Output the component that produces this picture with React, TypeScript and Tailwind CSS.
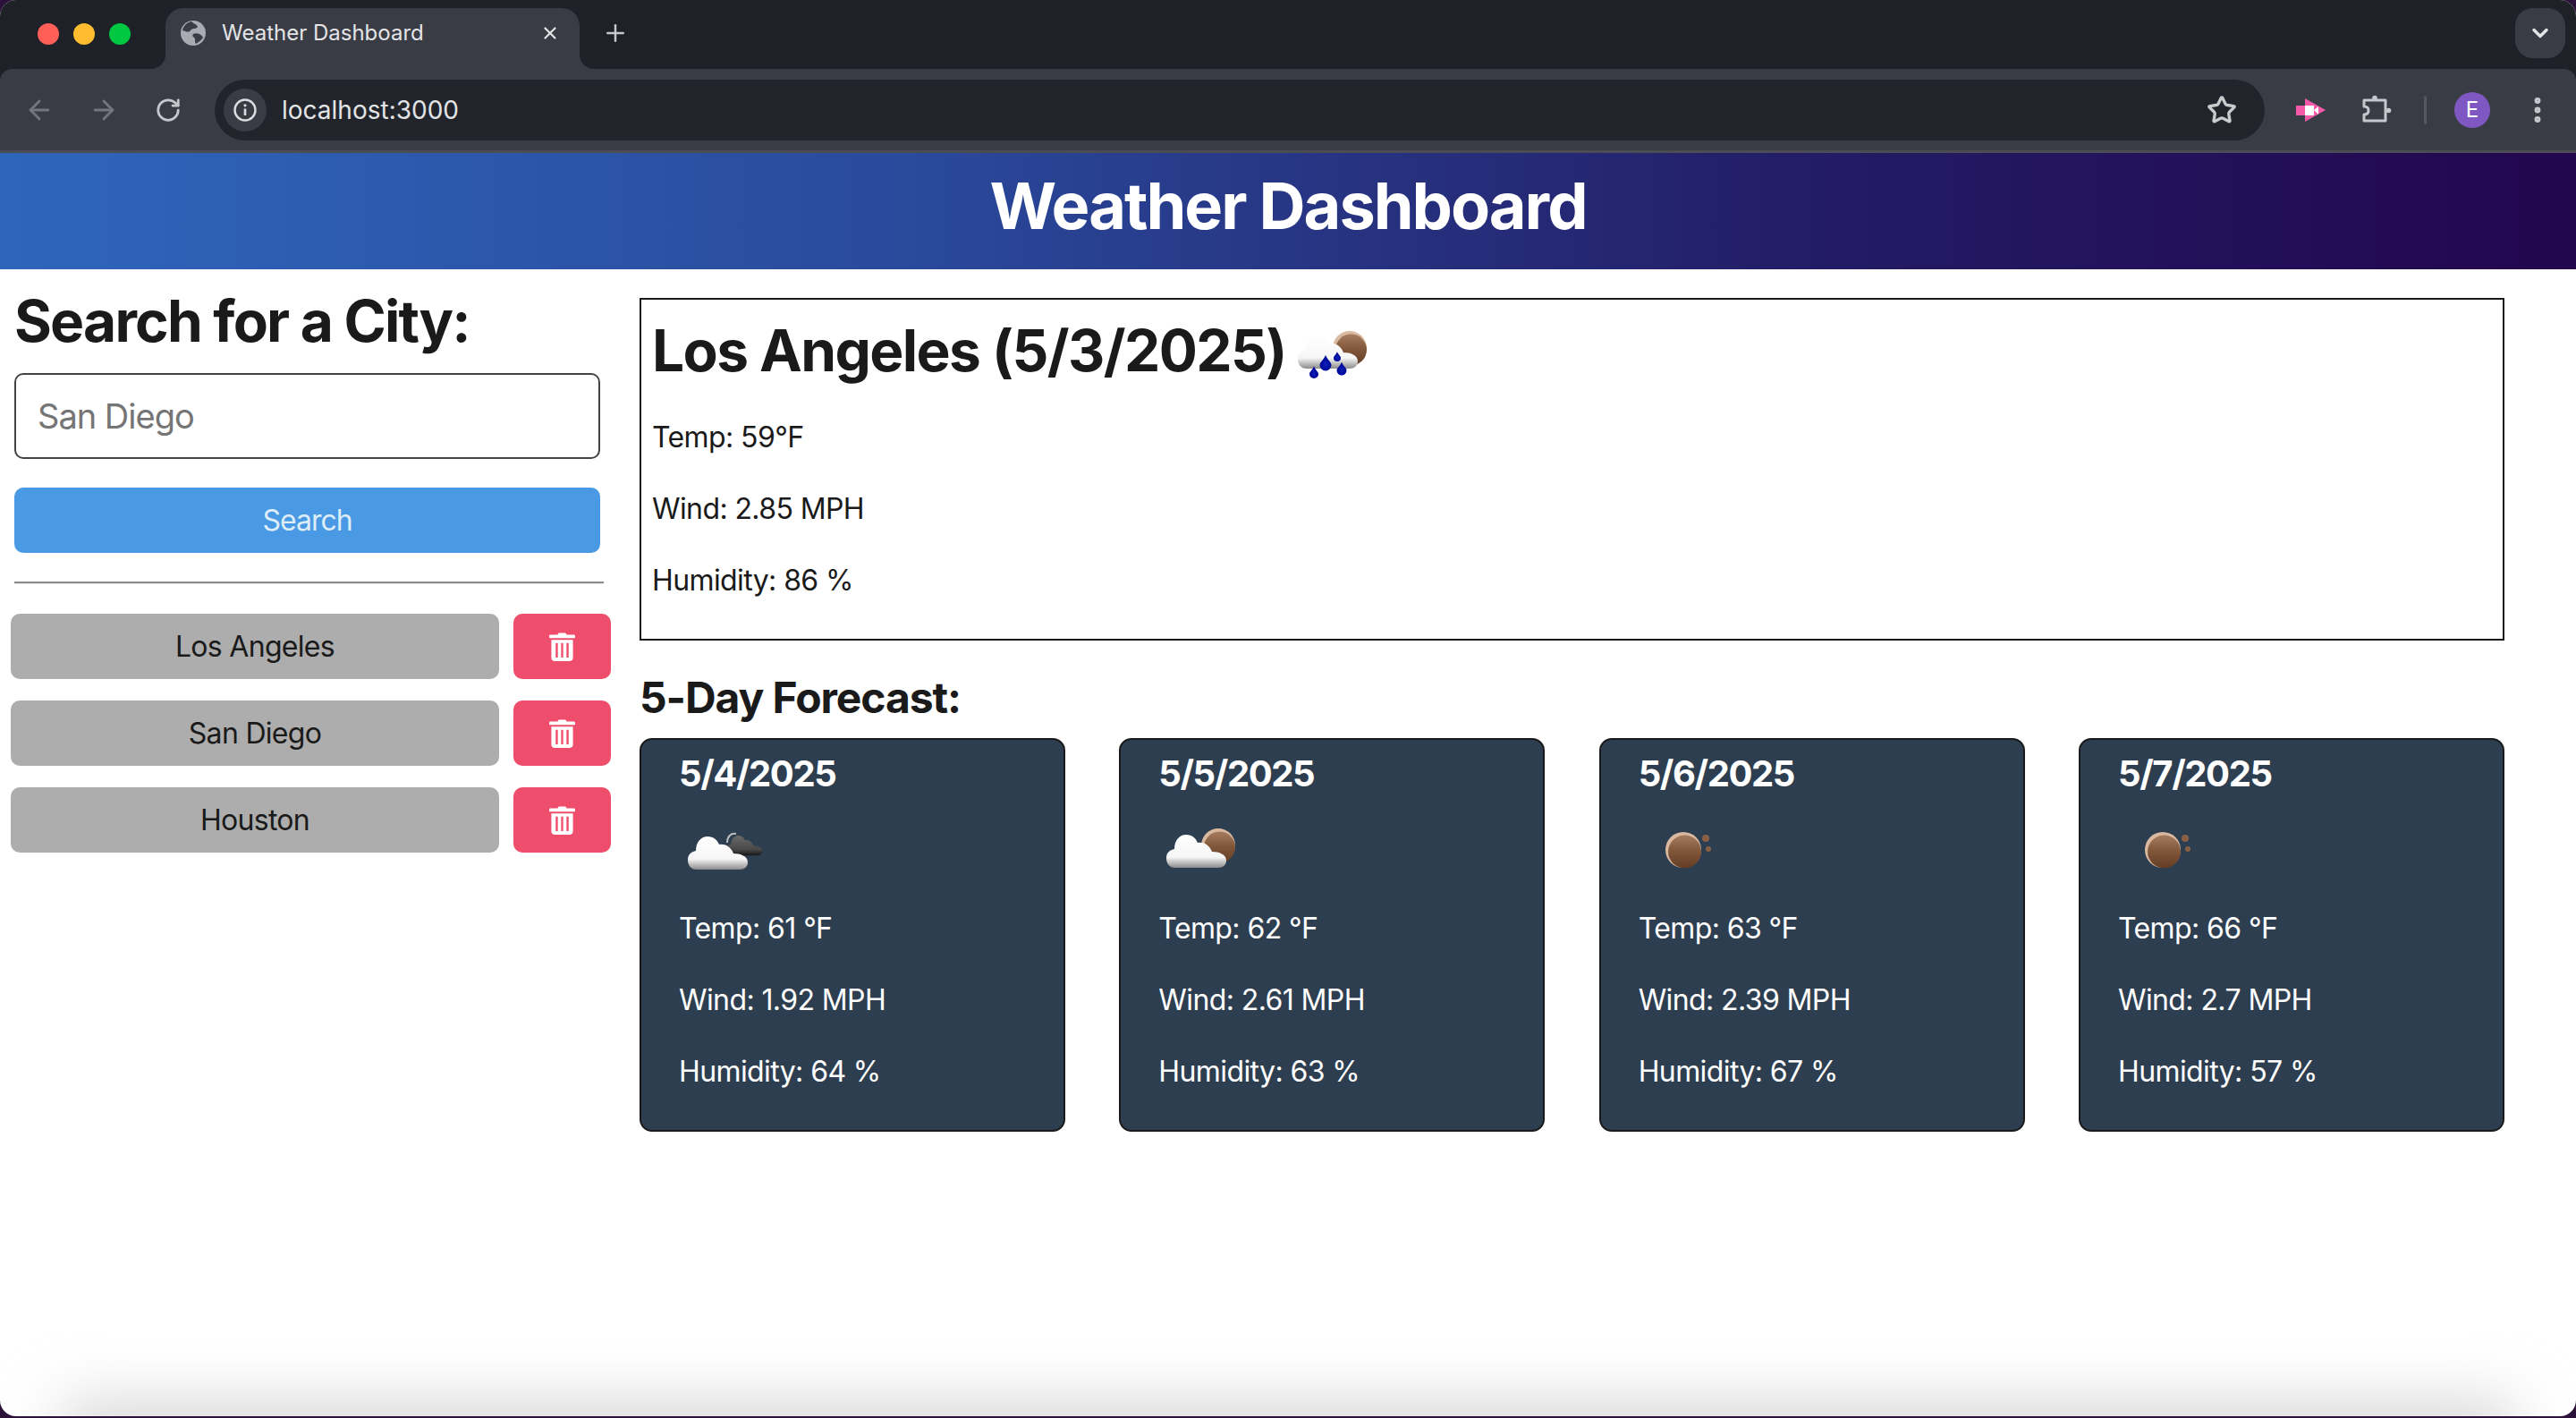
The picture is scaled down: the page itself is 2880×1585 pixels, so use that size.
import { ArrowLeft, ArrowRight, ChevronDown, EllipsisVertical, Plus, RotateCw, Star, X } from "lucide-react";

type Forecast = {
  date: string;
  icon: "dark-cloud" | "cloud-moon" | "moon";
  temp: number;
  wind: string;
  humidity: number;
};

const forecasts: Forecast[] = [
  { date: "5/4/2025", icon: "dark-cloud", temp: 61, wind: "1.92", humidity: 64 },
  { date: "5/5/2025", icon: "cloud-moon", temp: 62, wind: "2.61", humidity: 63 },
  { date: "5/6/2025", icon: "moon", temp: 63, wind: "2.39", humidity: 67 },
  { date: "5/7/2025", icon: "moon", temp: 66, wind: "2.7", humidity: 57 },
];

const cities = ["Los Angeles", "San Diego", "Houston"];

const cloudPath =
  "M10 37 C3 37 0 32 0 26 C0 20 4 17 9 16 C9 6 15 0 22 0 C29 0 33 4 35 9 C41 8 48 11 51 19 C59 19 67 22 67 29 C67 34 63 37 58 37 Z";

function WeatherDefs() {
  return (
    <svg width="0" height="0" className="absolute">
      <defs>
        <linearGradient id="cloudFill" x1="0" y1="0" x2="0" y2="1">
          <stop offset="0" stopColor="#ffffff" />
          <stop offset="0.68" stopColor="#f6f6f6" />
          <stop offset="1" stopColor="#8b8b8b" />
        </linearGradient>
        <linearGradient id="darkCloudFill" x1="0" y1="0" x2="0" y2="1">
          <stop offset="0" stopColor="#6a6a6a" />
          <stop offset="0.7" stopColor="#484848" />
          <stop offset="1" stopColor="#161616" />
        </linearGradient>
        <linearGradient id="moonFill" x1="0" y1="0" x2="0" y2="1">
          <stop offset="0" stopColor="#a67c60" />
          <stop offset="0.5" stopColor="#7f5538" />
          <stop offset="1" stopColor="#633d25" />
        </linearGradient>
        <radialGradient id="dropFill" cx="0.5" cy="0.6" r="0.6">
          <stop offset="0" stopColor="#0a1db8" />
          <stop offset="1" stopColor="#00008a" />
        </radialGradient>
        <filter id="soft" x="-20%" y="-20%" width="140%" height="140%">
          <feGaussianBlur stdDeviation="0.7" />
        </filter>
      </defs>
    </svg>
  );
}

function Drop({ x, y, r }: { x: number; y: number; r: number }) {
  return <path d={`M${x} ${y - r * 1.7} C${x + r * 0.4} ${y - r * 0.8} ${x + r} ${y - r * 0.5} ${x + r} ${y} A${r} ${r} 0 1 1 ${x - r} ${y} C${x - r} ${y - r * 0.5} ${x - r * 0.4} ${y - r * 0.8} ${x} ${y - r * 1.7} Z`} fill="url(#dropFill)" />;
}

function Moon({ cx, cy, r }: { cx: number; cy: number; r: number }) {
  return (
    <g>
      <circle cx={cx} cy={cy} r={r} fill="#d9b9a0" />
      <circle cx={cx + 1.5} cy={cy + 2} r={r - 1.5} fill="url(#moonFill)" />
    </g>
  );
}

function WeatherIcon({ kind }: { kind: Forecast["icon"] }) {
  return (
    <svg width="100" height="100" viewBox="0 0 100 100" className="block">
      <g filter="url(#soft)">
        {kind === "dark-cloud" && (
          <g>
            <path d="M54 42 C54 35 58 31 64 32" fill="none" stroke="#b9bdbf" strokeWidth="2" />
            <g transform="translate(53 34) scale(0.6 0.6)">
              <path d={cloudPath} fill="url(#darkCloudFill)" />
            </g>
            <g transform="translate(10 35)">
              <path d={cloudPath} fill="url(#cloudFill)" />
            </g>
          </g>
        )}
        {kind === "cloud-moon" && (
          <g>
            <Moon cx={67} cy={45} r={19} />
            <g transform="translate(9 33)">
              <path d={cloudPath} fill="url(#cloudFill)" />
            </g>
          </g>
        )}
        {kind === "moon" && (
          <g>
            <Moon cx={50} cy={50} r={20} />
            <circle cx={75} cy={37} r={4} fill="#8a6045" />
            <circle cx={78} cy={49} r={3} fill="#8a6045" />
          </g>
        )}
      </g>
    </svg>
  );
}

function RainIcon() {
  return (
    <svg width="100" height="100" viewBox="0 0 100 100" className="block">
      <g filter="url(#soft)">
        <Moon cx={68} cy={47} r={19} />
        <g transform="translate(10 33)">
          <path d={cloudPath} fill="url(#cloudFill)" />
        </g>
        <Drop x={28} y={76} r={5} />
        <Drop x={41} y={66} r={6.5} />
        <Drop x={54} y={58} r={4} />
        <Drop x={59} y={72} r={5.5} />
      </g>
    </svg>
  );
}

function TrashIcon() {
  return (
    <svg width="29" height="32" viewBox="0 0 30 33" fill="#ffffff">
      <path d="M10 2.5 C10 1 11 0.5 12 0.5 H18 C19 0.5 20 1 20 2.5 H28.5 C29.3 2.5 30 3.2 30 4 V5.5 C30 6 29.6 6.5 29 6.5 H1 C0.4 6.5 0 6 0 5.5 V4 C0 3.2 0.7 2.5 1.5 2.5 Z" />
      <path fillRule="evenodd" d="M2.5 8.5 H27.5 V29.5 C27.5 31.4 26 33 24 33 H6 C4 33 2.5 31.4 2.5 29.5 Z M7.5 12 V29 H10 V12 Z M13.8 12 V29 H16.2 V12 Z M20 12 V29 H22.5 V12 Z" />
    </svg>
  );
}

function GlobeFavicon() {
  return (
    <svg width="28" height="28" viewBox="0 0 28 28">
      <circle cx="14" cy="14" r="14" fill="#a9abb2" />
      <path d="M12 1 C15 4 18 4 19 7 C17 10 13 8 11 11 C9 14 6 12 2 11 C3 6 7 2 12 1 Z" fill="#3a3c45" />
      <path d="M14 15 C18 13 23 15 25 19 C23 22 20 24 17 26 C15 23 17 21 15 19 C13 18 13 16 14 15 Z" fill="#3a3c45" />
    </svg>
  );
}

function InfoGlyph() {
  return (
    <svg width="26" height="26" viewBox="0 0 26 26" fill="none" stroke="#dcdde0" strokeWidth="2.4">
      <circle cx="13" cy="13" r="11.5" />
      <path d="M13 11.5 V19" strokeWidth="2.6" />
      <circle cx="13" cy="7.8" r="1.6" fill="#dcdde0" stroke="none" />
    </svg>
  );
}

function PuzzleGlyph() {
  return (
    <svg width="34" height="34" viewBox="0 0 34 34" fill="none" stroke="#c4c7cc" strokeWidth="3" strokeLinejoin="round">
      <path d="M3 6 H27 V29 H3 V22 C6.5 22 8 20 8 17.5 C8 15 6.5 13 3 13 Z" />
      <circle cx="15" cy="3.5" r="2.8" fill="#c4c7cc" stroke="none" />
      <circle cx="30.5" cy="17.5" r="2.8" fill="#c4c7cc" stroke="none" />
    </svg>
  );
}

function RecorderGlyph() {
  return (
    <svg width="34" height="28" viewBox="0 0 34 28">
      <rect x="0" y="9" width="10" height="11" fill="#f45aa8" />
      <path d="M10 1 L33 14 L10 27 Z" fill="#f45aa8" />
      <rect x="10" y="9" width="10" height="11" fill="#ffffff" />
      <path d="M20 14 L25 10 V19 Z" fill="#ffffff" />
    </svg>
  );
}

function BrowserChrome() {
  return (
    <div className="shrink-0 bg-[#1e2128] font-['Inter',sans-serif]">
      <div className="flex h-[77px] items-start">
        <div className="flex h-[76px] w-[185px] shrink-0 items-center gap-4 pl-[42px]">
          <span className="size-6 rounded-full bg-[#ff5f57]" />
          <span className="size-6 rounded-full bg-[#febc2e]" />
          <span className="size-6 rounded-full bg-[#00c840]" />
        </div>
        <div className="relative mt-[9px] flex h-[68px] w-[463px] shrink-0 items-start rounded-t-[20px] bg-[#3a3c45] pl-[17px] pt-[14px]">
          <span className="absolute -left-4 bottom-0 size-4 bg-[#3a3c45]">
            <span className="block size-4 rounded-br-[16px] bg-[#1e2128]" />
          </span>
          <span className="absolute -right-4 bottom-0 size-4 bg-[#3a3c45]">
            <span className="block size-4 rounded-bl-[16px] bg-[#1e2128]" />
          </span>
          <GlobeFavicon />
          <span className="ml-[18px] text-[24px] leading-[28px] text-[#e3e4e6]">Weather Dashboard</span>
          <X className="absolute right-[22px] top-[17px] text-[#e3e4e6]" size={22} strokeWidth={2.4} />
        </div>
        <Plus className="ml-[25px] mt-[22px] text-[#c4c7cc]" size={30} strokeWidth={2} />
        <div className="ml-auto mr-3 mt-[9px] flex size-14 items-center justify-center rounded-[20px] bg-[#3a3c45]">
          <ChevronDown className="text-[#e3e4e6]" size={28} strokeWidth={3} />
        </div>
      </div>
      <div className="flex h-[94px] items-start rounded-t-[14px] border-b-[3px] border-[#4b4c54] bg-[#3a3c45] pt-3">
        <div className="flex h-[68px] w-[240px] shrink-0 items-center pl-[27px]">
          <ArrowLeft className="text-[#75767d]" size={34} strokeWidth={2} />
          <ArrowRight className="ml-[38px] text-[#75767d]" size={34} strokeWidth={2} />
          <RotateCw className="ml-[40px] text-[#c4c7cc]" size={30} strokeWidth={2.2} />
        </div>
        <div className="flex h-[68px] w-[2292px] shrink-0 items-center rounded-full bg-[#22242c] pl-[10px] pr-[31px]">
          <span className="flex size-12 items-center justify-center rounded-full bg-[#3a3c45]">
            <InfoGlyph />
          </span>
          <span className="ml-[17px] text-[28px] text-[#e3e4e6]">localhost:3000</span>
          <Star className="ml-auto text-[#c9cacc]" size={34} strokeWidth={2.4} />
        </div>
        <div className="flex h-[68px] flex-1 items-center">
          <span className="ml-[35px]"><RecorderGlyph /></span>
          <span className="ml-[39px]"><PuzzleGlyph /></span>
          <span className="ml-[36px] h-8 w-[3px] rounded-full bg-[#55565e]" />
          <span className="ml-[31px] flex size-10 items-center justify-center rounded-full bg-[#7e57c2] text-[24px] text-white">E</span>
          <EllipsisVertical className="ml-[35px] text-[#c4c7cc]" size={36} strokeWidth={2.6} />
        </div>
      </div>
    </div>
  );
}

function Sidebar() {
  return (
    <aside className="w-[715px] shrink-0 pl-3 pt-[19px]">
      <div className="w-[663px] pl-1">
        <h2 className="mb-5 text-[64px] font-bold leading-[77px] tracking-[-1.8px] text-[#1a1a1a]">Search for a City:</h2>
        <input
          readOnly
          placeholder="San Diego"
          className="block h-24 w-[655px] rounded-[10px] border-2 border-[#444444] bg-white px-6 text-[38px] tracking-[-1px] text-[#212529] placeholder:text-[#757575]"
        />
        <button className="mt-8 block h-[73px] w-[655px] rounded-[10px] bg-[#4a99e4] text-[32px] tracking-[-1px] text-[#dcedf8]">Search</button>
        <hr className="mt-8 h-[3px] border-0 border-b border-b-[#e6e6e6] bg-[#8c8c8c]" />
      </div>
      <div className="mt-[33px] flex flex-col gap-6">
        {cities.map((city) => (
          <div key={city} className="flex h-[73px] gap-4">
            <button className="w-[546px] rounded-[10px] bg-[#adadad] text-[32px] tracking-[-0.7px] text-[#1a1a1a]">{city}</button>
            <button className="flex w-[109px] items-center justify-center rounded-[10px] bg-[#ee4e6b]">
              <TrashIcon />
            </button>
          </div>
        ))}
      </div>
    </aside>
  );
}

function ForecastCard({ item }: { item: Forecast }) {
  return (
    <div className="h-[440px] w-[476px] rounded-[14px] border-2 border-[#1a1a1a] bg-[#2d3e50] pl-[42px] pt-[14px] text-white">
      <h4 className="text-[40px] font-bold leading-[48px] tracking-[-1.4px]">{item.date}</h4>
      <div className="mt-[11px]">
        <WeatherIcon kind={item.icon} />
      </div>
      <p className="mt-[14px] text-[32px] leading-[48px] tracking-[-0.6px]">Temp: {item.temp} °F</p>
      <p className="mt-8 text-[32px] leading-[48px] tracking-[-0.6px]">Wind: {item.wind} MPH</p>
      <p className="mt-8 text-[32px] leading-[48px] tracking-[-0.6px]">Humidity: {item.humidity} %</p>
    </div>
  );
}

export default function App() {
  return (
    <div className="h-[1585px] w-[2880px] overflow-hidden bg-[#2a1238] font-['Inter',sans-serif]">
      <WeatherDefs />
      <div className="relative flex h-[1583px] flex-col overflow-hidden rounded-[18px] bg-white text-[#1a1a1a]">
        <BrowserChrome />
        <header className="flex h-[130px] shrink-0 items-center justify-center bg-[linear-gradient(90deg,#2e66bc,#2a4a9c_35%,#231c66_70%,#22064e)] pb-3">
          <h1 className="text-[72px] font-bold leading-none tracking-[-2px] text-white">Weather Dashboard</h1>
        </header>
        <main className="flex flex-1">
          <Sidebar />
          <section className="w-[2085px] pt-8">
            <div className="h-[383px] border-2 border-[#1a1a1a] pl-3 pt-[18px]">
              <div className="flex items-center">
                <h2 className="text-[64px] font-bold leading-[77px] tracking-[-1.6px]">Los Angeles (5/3/2025)</h2>
                <div className="-my-3 ml-[3px]">
                  <RainIcon />
                </div>
              </div>
              <p className="mt-[35px] text-[32px] leading-[48px] tracking-[-0.6px]">Temp: 59°F</p>
              <p className="mt-8 text-[32px] leading-[48px] tracking-[-0.6px]">Wind: 2.85 MPH</p>
              <p className="mt-8 text-[32px] leading-[48px] tracking-[-0.6px]">Humidity: 86 %</p>
            </div>
            <h3 className="mb-4 mt-[35px] text-[48px] font-bold leading-[58px] tracking-[-1.1px]">5-Day Forecast:</h3>
            <div className="flex justify-between">
              {forecasts.map((item) => (
                <ForecastCard key={item.date} item={item} />
              ))}
            </div>
          </section>
        </main>
        <div className="pointer-events-none absolute inset-x-0 bottom-0 h-[150px] overflow-hidden">
          <div className="absolute left-[70px] right-[70px] top-[135px] h-[70px] bg-[#d4d4d4] blur-[34px]" />
        </div>
      </div>
    </div>
  );
}
